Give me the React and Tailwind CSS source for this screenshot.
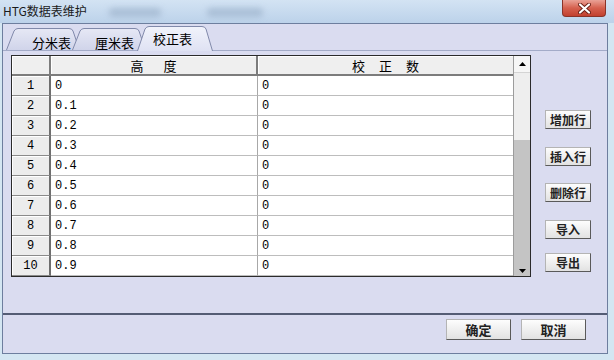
import React from "react";

const rows = ["0", "0.1", "0.2", "0.3", "0.4", "0.5", "0.6", "0.7", "0.8", "0.9"];

// tab outline: slanted left edge, short slant on the right
function Tab({ label, w, h, selected, id, textPad, className }) {
  const d = `M0.5 ${h} L8 3 Q9.5 0.5 12 0.5 L${w - 11} 0.5 Q${w - 8} 0.5 ${w - 7} 3 L${w - 0.5} ${h}`;
  return (
    <div className={"relative shrink-0 " + className} style={{ width: w, height: h }}>
      <svg className="absolute inset-0" width={w} height={h} viewBox={`0 0 ${w} ${h}`}>
        <defs>
          <linearGradient id={id} x1="0" y1="0" x2="0" y2="1">
            <stop offset="0" stopColor={selected ? "#f1f3fb" : "#e6e8f5"} />
            <stop offset="1" stopColor={selected ? "#dfe2f3" : "#d0d4ea"} />
          </linearGradient>
        </defs>
        <path d={d + " Z"} fill={`url(#${id})`} />
        <path d={d} fill="none" stroke="#8089aa" strokeWidth="1" />
      </svg>
      <span
        className="relative block text-[13px] leading-none text-black"
        style={{ paddingLeft: textPad, paddingTop: selected ? 6 : 8 }}
      >
        {label}
      </span>
    </div>
  );
}

function Btn({ children, className }) {
  return (
    <div
      className={
        "flex items-center justify-center border border-[#b4b4b4] border-r-[#5a5a5a] border-b-[#5a5a5a] bg-gradient-to-b from-[#fdfdfd] to-[#e2e2e2] text-[12px] font-bold leading-none text-[#222] " +
        className
      }
    >
      {children}
    </div>
  );
}

function Arrow({ up }) {
  return (
    <svg width="7" height="4" viewBox="0 0 7 4">
      <path d={up ? "M0 4 L3.5 0 L7 4 Z" : "M0 0 L3.5 4 L7 0 Z"} fill="#000" />
    </svg>
  );
}

export default function App() {
  return (
    <div className="w-[614px] h-[360px] overflow-hidden flex flex-col bg-[#d4e6f2] font-['Noto_Sans_CJK_SC',sans-serif]">
      {/* title bar */}
      <div className="h-[23px] shrink-0 flex items-start bg-gradient-to-b from-[#d3e3f3] to-[#bcd2ea]">
        <span className="pl-[3px] pt-[3px] text-[12px] leading-[15px] text-[#1a1a1a]">HTG数据表维护</span>
        <div className="ml-[22px] mt-[8px] w-[52px] h-[9px] rounded bg-[#9db3cc] blur-[3px] opacity-70" />
        <div className="ml-[46px] mt-[8px] w-[56px] h-[9px] rounded bg-[#9db3cc] blur-[3px] opacity-70" />
        <div className="ml-auto mr-[8px] w-[44px] h-[17px] flex items-center justify-center rounded-b-[4px] border border-t-0 border-[#8a3328] bg-gradient-to-b from-[#e9a196] via-[#d5604e] to-[#c2402e]">
          <svg width="13" height="11" viewBox="0 0 13 11">
            <path d="M2 1.5 L11 9.5 M11 1.5 L2 9.5" stroke="#6a2016" strokeWidth="4" strokeLinecap="round" />
            <path d="M2 1.5 L11 9.5 M11 1.5 L2 9.5" stroke="#fff" strokeWidth="2.2" strokeLinecap="round" />
          </svg>
        </div>
      </div>

      {/* client area */}
      <div className="ml-[2px] w-[606px] h-[331px] shrink-0 flex flex-col border border-[#6d7e9e] bg-[#dadcf0]">
        {/* tab strip */}
        <div className="h-[26px] shrink-0 flex items-end pl-[3px]">
          <Tab id="t1" label="分米表" w={74} h={22} textPad={26} />
          <Tab id="t2" label="厘米表" w={74} h={22} textPad={23} className="-ml-[8px]" />
          <Tab id="t3" label="校正表" w={76} h={25} textPad={16} selected className="-ml-[9px] -mb-px z-10" />
        </div>

        {/* tab page */}
        <div className="h-[263px] shrink-0 flex border-t border-[#a3abc8] pl-[8px] pt-[4px]">
          <div className="w-[520px] h-[222px] flex border border-[#2b2b2b] bg-white">
            <div className="flex-1 flex flex-col">
              <div className="h-[20px] flex text-[13px] leading-none">
                <div className="w-[39px] bg-[#efefef] border-r-2 border-b-2 border-[#7c7c7c] shadow-[inset_1px_1px_0_#fff]" />
                <div className="w-[207px] flex items-center justify-center gap-[20px] bg-[#efefef] border-r-2 border-b-2 border-[#7c7c7c] shadow-[inset_1px_1px_0_#fff]">
                  <span>高</span>
                  <span>度</span>
                </div>
                <div className="flex-1 flex items-center justify-center gap-[14px] bg-[#efefef] border-b-2 border-[#7c7c7c] shadow-[inset_1px_1px_0_#fff]">
                  <span>校</span>
                  <span>正</span>
                  <span>数</span>
                </div>
              </div>
              {rows.map((v, i) => (
                <div key={i} className="h-[20px] flex font-['Liberation_Mono',monospace] text-[12px] leading-none text-black">
                  <div className="w-[39px] flex items-center justify-center bg-[#ececec] border-r-2 border-b border-r-[#6e6e6e] border-b-[#8a8a8a] shadow-[inset_1px_1px_0_#fff]">
                    {i + 1}
                  </div>
                  <div className="w-[207px] flex items-center pl-[4px] border-r border-b border-r-[#a8a8a8] border-b-[#bdbdbd]">
                    {v}
                  </div>
                  <div className="flex-1 flex items-center pl-[4px] border-b border-[#bdbdbd]">0</div>
                </div>
              ))}
            </div>
            {/* scrollbar */}
            <div className="w-[17px] flex flex-col border-l border-[#9c9c9c]">
              <div className="h-[17px] flex items-center justify-center bg-[#f6f6f6] border-b border-[#d4d4d4]">
                <Arrow up />
              </div>
              <div className="h-[67px] bg-[#eeeeee]" />
              <div className="flex-1 bg-[#c4c4c4]" />
              <div className="h-[14px] flex items-end justify-center pb-[3px] bg-[#c4c4c4]">
                <Arrow />
              </div>
            </div>
          </div>

          {/* side buttons */}
          <div className="ml-[14px] mt-[55px] flex flex-col">
            <Btn className="w-[46px] h-[19px]">增加行</Btn>
            <Btn className="w-[46px] h-[19px] mt-[18px]">插入行</Btn>
            <Btn className="w-[46px] h-[19px] mt-[17px]">删除行</Btn>
            <Btn className="w-[46px] h-[19px] mt-[18px]">导入</Btn>
            <Btn className="w-[46px] h-[19px] mt-[14px]">导出</Btn>
          </div>
        </div>

        <div className="h-[2px] shrink-0 bg-[#545c74]" />

        {/* bottom buttons */}
        <div className="flex-1 flex justify-end gap-[10px] pt-[4px] pr-[21px]">
          <Btn className="w-[65px] h-[21px] text-[13px]">确定</Btn>
          <Btn className="w-[65px] h-[21px] text-[13px]">取消</Btn>
        </div>
      </div>
    </div>
  );
}
